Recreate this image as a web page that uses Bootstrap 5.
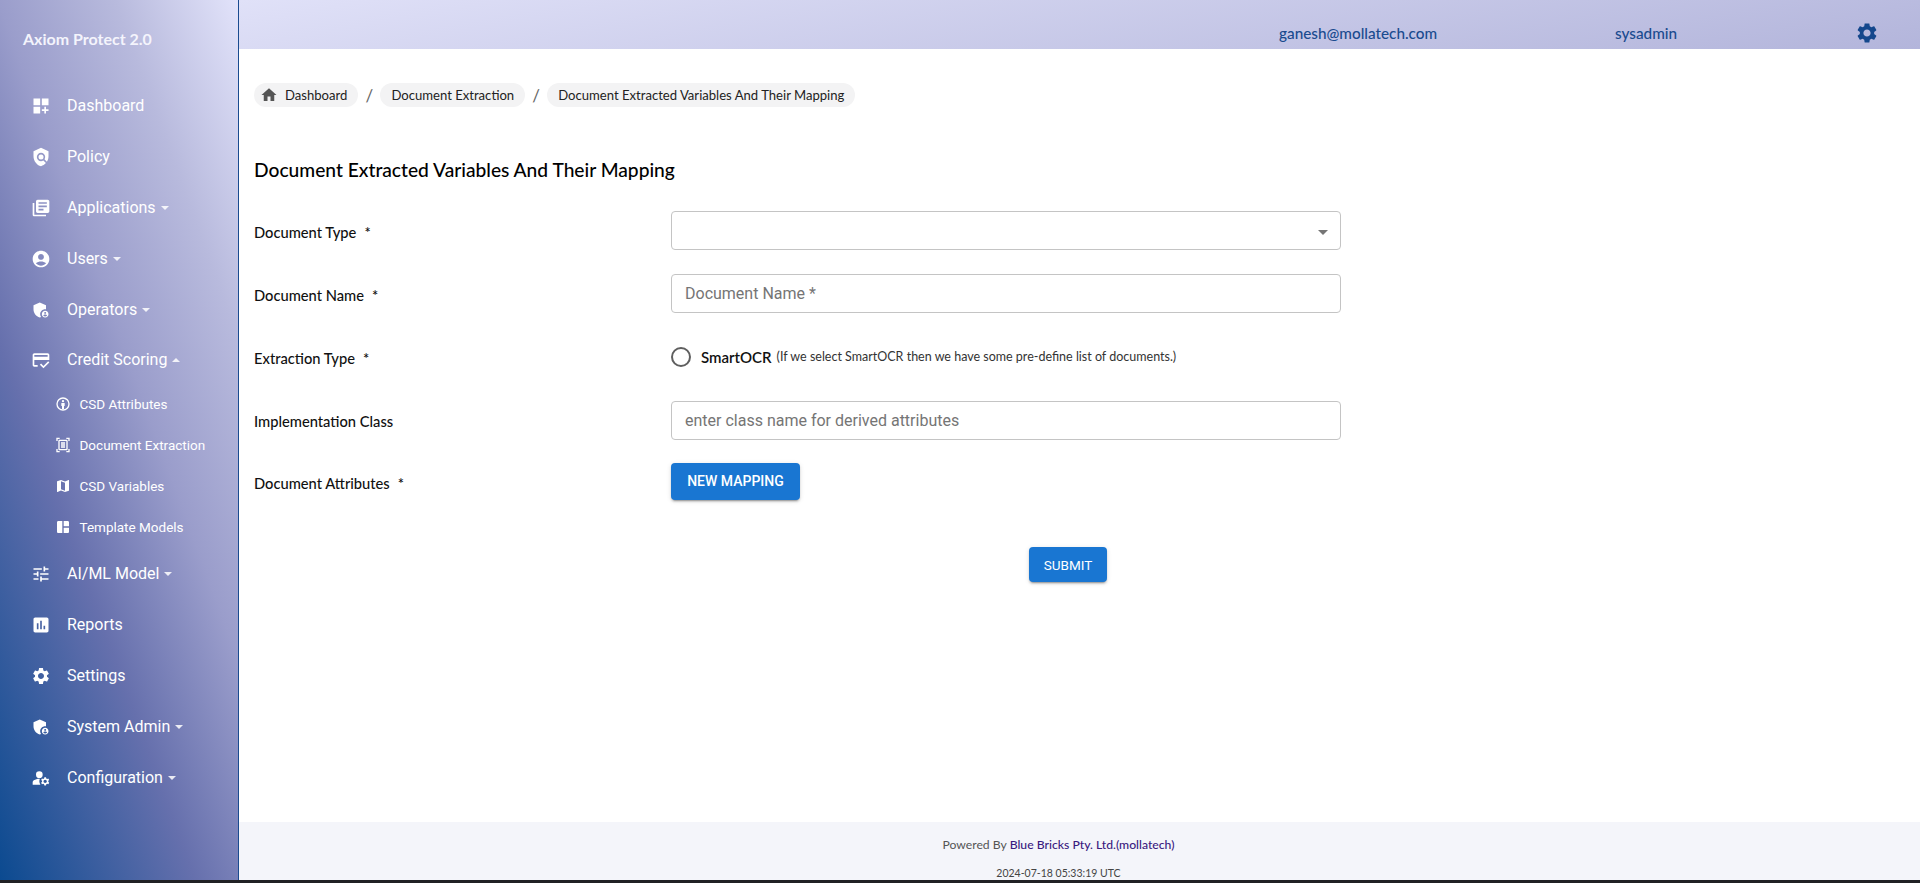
<!doctype html>
<html lang="en">
<head>
<meta charset="utf-8">
<title>Axiom Protect 2.0</title>
<link href="https://cdn.jsdelivr.net/npm/bootstrap@5.3.0/dist/css/bootstrap.min.css" rel="stylesheet">
<style>
html,body{height:883px;overflow:hidden;background:#202124;}
body{font-family:"Lato","Liberation Sans",sans-serif;color:#111;}
.shell{height:880px;background:#fff;}
.sidebar{width:239px;flex:none;background:linear-gradient(70deg,#0b4a90 0%,#6670ad 35%,#9a9dcb 57%,#b8badd 78%,#e2e3fa 100%);border-right:1px solid #1a4b8f;color:#fff;}
.brand{font-size:16px;font-weight:700;padding:29px 0 0 23px;height:81px;color:#f4f4fc;line-height:20px;}
.side-link{height:50.8px;padding-left:30px;color:#fff;font:400 16px/20px Roboto,sans-serif;text-decoration:none;}
.side-link svg{width:20px;height:20px;fill:#fff;flex:none;margin-right:16px;margin-left:1px;}
.side-sub{height:41px;padding-left:55px;color:#fff;font:400 13.5px/16px Roboto,sans-serif;text-decoration:none;}
.side-sub svg{width:16px;height:16px;fill:#fff;flex:none;margin-right:8.5px;margin-left:0;}
.caret-d,.caret-u{display:inline-block;margin-left:5px;border-left:4.5px solid transparent;border-right:4.5px solid transparent;}
.caret-d{border-top:4.5px solid rgba(255,255,255,.85);}
.caret-u{border-bottom:4.5px solid rgba(255,255,255,.85);}
.subgroup{margin-top:-1.8px;margin-bottom:1px;}
.topbar{height:49px;padding-top:17px;background:linear-gradient(170deg,#e0e1f8 0%,#b3b5db 100%);color:#1a4b8f;font-size:15.3px;font-weight:500;}
.top-mail{margin-left:1040px;width:336px;}
.top-role{width:240px;}
.topbar svg{width:24px;height:24px;fill:#14478c;}
.crumbs{padding:34px 0 0 15px;height:108px;font-size:13.1px;color:#222;}
.chip{height:24px;border-radius:12px;background:#f3f3f4;padding:0 11px;line-height:24px;white-space:nowrap;}
.chip svg{width:18px;height:18px;fill:#555;margin:0 7px 0 -5px;}
.crumb-sep{width:22px;text-align:center;color:#666;font-size:17px;}
.heading{margin:0 0 0 15px;font-size:19.2px;font-weight:500;line-height:24px;color:#000;height:54px;padding-top:1px;}
.form-area{padding-left:15px;}
.field-line{display:flex;align-items:center;}
.line-radio{height:40px;}
.line-class{margin-bottom:23px;}
.field-label{width:417px;flex:none;font-size:14.7px;font-weight:500;color:#111;padding-top:3px;}
.line-class .field-label{padding-top:2px;}
.req{margin-left:8px;}
.field-box{width:670px;flex:none;height:39px;border:1px solid #c4c4c4;border-radius:4px;background:#fff;padding:0 13px;font:400 16px Roboto,sans-serif;color:#212529;box-shadow:none;}
.field-box::placeholder{color:#757575;opacity:1;}
.select-tri{position:relative;}
.select-tri::after{content:"";position:absolute;right:12px;top:18px;border-left:5px solid transparent;border-right:5px solid transparent;border-top:5px solid #757575;}
.radio-ring{width:20px;height:20px;border:2px solid #5f5f5f;border-radius:50%;flex:none;margin-right:10px;}
.radio-main{font-size:15px;font-weight:600;color:#111;}
.radio-note{font-size:12.5px;color:#333;margin-left:5px;}
.mat-btn{background:#1976d2;border:0;border-radius:4px;color:#fff;font:400 14px Roboto,sans-serif;box-shadow:0 3px 1px -2px rgba(0,0,0,.2),0 2px 2px 0 rgba(0,0,0,.14),0 1px 5px 0 rgba(0,0,0,.12);padding:0;}
.btn-new{width:129px;height:37px;font-weight:500;padding-bottom:2px;}
.btn-send{width:78px;height:35px;margin-left:775px;margin-top:47px;font-size:13.5px;}
.page-foot{height:58px;padding-right:42px;background:#f4f5fa;text-align:center;font-size:12.2px;color:#555;}
.page-foot .who{color:#3a1a80;font-weight:500;}
.foot-a{height:45px;padding-top:14px;line-height:18px;}
.foot-b{font-size:10.5px;line-height:13px;color:#444;}
</style>
</head>
<body>
<svg width="0" height="0" class="d-none">
<symbol id="i-dash" viewBox="0 0 24 24"><path d="M3 3h8v8H3zm10 0h8v8h-8zM3 13h8v8H3zm15 0h-2v3h-3v2h3v3h2v-3h3v-2h-3z"/></symbol>
<symbol id="i-policy" viewBox="0 0 24 24"><path d="M12 1 3 5v6c0 5.55 3.84 10.74 9 12 2.3-.56 4.33-1.9 5.88-3.71l-3.12-3.12c-1.94 1.29-4.58 1.07-6.29-.64-1.95-1.95-1.95-5.12 0-7.07 1.95-1.95 5.12-1.95 7.07 0 1.71 1.71 1.92 4.35.64 6.29l2.9 2.9C20.29 15.69 21 13.38 21 11V5l-9-4z"/><circle cx="12" cy="12" r="3"/></symbol>
<symbol id="i-books" viewBox="0 0 24 24"><path d="M4 6H2v14c0 1.1.9 2 2 2h14v-2H4V6zm16-4H8c-1.1 0-2 .9-2 2v12c0 1.1.9 2 2 2h12c1.1 0 2-.9 2-2V4c0-1.1-.9-2-2-2zm-1 9H9V9h10v2zm-4 4H9v-2h6v2zm4-8H9V5h10v2z"/></symbol>
<symbol id="i-user" viewBox="0 0 24 24"><path d="M12 2C6.48 2 2 6.48 2 12s4.48 10 10 10 10-4.48 10-10S17.52 2 12 2zm0 4c1.93 0 3.5 1.57 3.5 3.5S13.93 13 12 13s-3.5-1.57-3.5-3.5S10.07 6 12 6zm0 14c-2.03 0-4.43-.82-6.14-2.88C7.55 15.8 9.68 15 12 15s4.45.8 6.14 2.12C16.43 19.18 14.03 20 12 20z"/></symbol>
<symbol id="i-admin" viewBox="0 0 24 24"><path d="M17 11c.34 0 .67.04 1 .09V6.27L10.5 3 3 6.27v4.91c0 4.54 3.2 8.79 7.5 9.82.55-.13 1.08-.32 1.6-.55-.69-.98-1.1-2.17-1.1-3.45 0-3.31 2.69-6 6-6z"/><path d="M17 13c-2.21 0-4 1.79-4 4s1.79 4 4 4 4-1.79 4-4-1.79-4-4-4zm0 1.38c.62 0 1.12.51 1.12 1.12s-.51 1.12-1.12 1.12-1.12-.51-1.12-1.12.5-1.12 1.12-1.12zm0 5.37c-.93 0-1.74-.46-2.24-1.17.05-.72 1.51-1.08 2.24-1.08s2.19.36 2.24 1.08c-.5.71-1.31 1.17-2.24 1.17z"/></symbol>
<symbol id="i-credit" viewBox="0 0 24 24"><path d="M20 4H4c-1.11 0-2 .89-2 2v12c0 1.11.89 2 2 2h4v-2H4v-6h18V6c0-1.11-.89-2-2-2zm0 4H4V6h16v2zm-5.07 11.17-2.83-2.83-1.41 1.41L14.93 22 22 14.93l-1.41-1.41-5.66 5.65z"/></symbol>
<symbol id="i-attr" viewBox="0 0 24 24"><path fill-rule="evenodd" d="M12 2a10 10 0 1 0 0 20 10 10 0 0 0 0-20zm0 2a8 8 0 1 1 0 16 8 8 0 0 1 0-16z"/><circle cx="12" cy="7.8" r="1.7"/><path d="M9.5 10.5h5V15h-1v4.5h-3V15h-1z"/></symbol>
<symbol id="i-scan" viewBox="0 0 24 24"><path d="M7 3H4v3H2V1h5v2zm15 3V1h-5v2h3v3h2zM7 21H4v-3H2v5h5v-2zm13-3v3h-3v2h5v-5h-2z"/><path fill-rule="evenodd" d="M7 4h10c1.1 0 2 .9 2 2v12c0 1.1-.9 2-2 2H7c-1.1 0-2-.9-2-2V6c0-1.1.9-2 2-2zm0 2v12h10V6H7z"/><path d="M9 8h6v2H9zm0 3h6v2H9zm0 3h6v2H9z"/></symbol>
<symbol id="i-map" viewBox="0 0 24 24"><path d="M20.5 3l-.16.03L15 5.1 9 3 3.36 4.9c-.21.07-.36.25-.36.48V20.5c0 .28.22.5.5.5l.16-.03L9 18.9l6 2.1 5.64-1.9c.21-.07.36-.25.36-.48V3.5c0-.28-.22-.5-.5-.5zM15 19l-6-2.11V5l6 2.11V19z"/></symbol>
<symbol id="i-mosaic" viewBox="0 0 24 24"><path d="M3 5v14c0 1.1.89 2 2 2h6V3H5c-1.11 0-2 .9-2 2zm16-2h-6v8h8V5c0-1.1-.9-2-2-2zm-6 18h6c1.1 0 2-.9 2-2v-6h-8v8z"/></symbol>
<symbol id="i-tune" viewBox="0 0 24 24"><path d="M3 17v2h6v-2H3zM3 5v2h10V5H3zm10 16v-2h8v-2h-8v-2h-2v6h2zM7 9v2H3v2h4v2h2V9H7zm14 4v-2H11v2h10zm-6-4h2V7h4V5h-4V3h-2v6z"/></symbol>
<symbol id="i-report" viewBox="0 0 24 24"><path d="M19 3H5c-1.1 0-2 .9-2 2v14c0 1.1.9 2 2 2h14c1.1 0 2-.9 2-2V5c0-1.1-.9-2-2-2zM9 17H7v-7h2v7zm4 0h-2V7h2v10zm4 0h-2v-4h2v4z"/></symbol>
<symbol id="i-gear" viewBox="0 0 24 24"><path d="M19.14 12.94c.04-.3.06-.61.06-.94 0-.32-.02-.64-.07-.94l2.03-1.58c.18-.14.23-.41.12-.61l-1.92-3.32c-.12-.22-.37-.29-.59-.22l-2.39.96c-.5-.38-1.03-.7-1.62-.94l-.36-2.54c-.04-.24-.24-.41-.48-.41h-3.84c-.24 0-.43.17-.47.41l-.36 2.54c-.59.24-1.13.57-1.62.94l-2.39-.96c-.22-.08-.47 0-.59.22L2.74 8.87c-.12.21-.08.47.12.61l2.03 1.58c-.05.3-.09.63-.09.94s.02.64.07.94l-2.03 1.58c-.18.14-.23.41-.12.61l1.92 3.32c.12.22.37.29.59.22l2.39-.96c.5.38 1.03.7 1.62.94l.36 2.54c.05.24.24.41.48.41h3.84c.24 0 .44-.17.47-.41l.36-2.54c.59-.24 1.13-.56 1.62-.94l2.39.96c.22.08.47 0 .59-.22l1.92-3.32c.12-.22.07-.47-.12-.61l-2.01-1.58zM12 15.6c-1.98 0-3.6-1.62-3.6-3.6s1.62-3.6 3.6-3.6 3.6 1.62 3.6 3.6-1.62 3.6-3.6 3.6z"/></symbol>
<symbol id="i-manage" viewBox="0 0 24 24"><circle cx="10" cy="8" r="4"/><path d="M10.67 13.02c-.22-.01-.44-.02-.67-.02-2.42 0-4.68.67-6.61 1.82-.88.52-1.39 1.5-1.39 2.53V20h9.26c-.79-1.13-1.26-2.51-1.26-4 0-1.07.25-2.07.67-2.98z"/><path d="M20.75 16c0-.22-.03-.42-.06-.63l1.14-1.01-1-1.73-1.45.49c-.32-.27-.68-.48-1.08-.63L18 11h-2l-.3 1.49c-.4.15-.76.36-1.08.63l-1.45-.49-1 1.73 1.14 1.01c-.03.21-.06.41-.06.63s.03.42.06.63l-1.14 1.01 1 1.73 1.45-.49c.32.27.68.48 1.08.63L16 21h2l.3-1.49c.4-.15.76-.36 1.08-.63l1.45.49 1-1.73-1.14-1.01c.03-.21.06-.41.06-.63zM17 18c-1.1 0-2-.9-2-2s.9-2 2-2 2 .9 2 2-.9 2-2 2z"/></symbol>
<symbol id="i-home" viewBox="0 0 24 24"><path d="M10 20v-6h4v6h5v-8h3L12 3 2 12h3v8z"/></symbol>
</svg>
<div class="shell d-flex">
  <aside class="sidebar d-flex flex-column">
    <div class="brand">Axiom Protect 2.0</div>
    <nav class="nav flex-column flex-nowrap">
      <a class="side-link d-flex align-items-center" href="#"><svg><use href="#i-dash"/></svg>Dashboard</a>
      <a class="side-link d-flex align-items-center" href="#"><svg><use href="#i-policy"/></svg>Policy</a>
      <a class="side-link d-flex align-items-center" href="#"><svg><use href="#i-books"/></svg>Applications<span class="caret-d"></span></a>
      <a class="side-link d-flex align-items-center" href="#"><svg><use href="#i-user"/></svg>Users<span class="caret-d"></span></a>
      <a class="side-link d-flex align-items-center" href="#"><svg><use href="#i-admin"/></svg>Operators<span class="caret-d"></span></a>
      <a class="side-link d-flex align-items-center" href="#"><svg><use href="#i-credit"/></svg>Credit Scoring<span class="caret-u"></span></a>
      <div class="subgroup d-flex flex-column">
        <a class="side-sub d-flex align-items-center" href="#"><svg><use href="#i-attr"/></svg>CSD Attributes</a>
        <a class="side-sub d-flex align-items-center" href="#"><svg><use href="#i-scan"/></svg>Document Extraction</a>
        <a class="side-sub d-flex align-items-center" href="#"><svg><use href="#i-map"/></svg>CSD Variables</a>
        <a class="side-sub d-flex align-items-center" href="#"><svg><use href="#i-mosaic"/></svg>Template Models</a>
      </div>
      <a class="side-link d-flex align-items-center" href="#"><svg><use href="#i-tune"/></svg>AI/ML Model<span class="caret-d"></span></a>
      <a class="side-link d-flex align-items-center" href="#"><svg><use href="#i-report"/></svg>Reports</a>
      <a class="side-link d-flex align-items-center" href="#"><svg><use href="#i-gear"/></svg>Settings</a>
      <a class="side-link d-flex align-items-center" href="#"><svg><use href="#i-admin"/></svg>System Admin<span class="caret-d"></span></a>
      <a class="side-link d-flex align-items-center" href="#"><svg><use href="#i-manage"/></svg>Configuration<span class="caret-d"></span></a>
    </nav>
  </aside>
  <div class="flex-grow-1 d-flex flex-column">
    <header class="topbar d-flex align-items-center">
      <div class="top-mail">ganesh@mollatech.com</div>
      <div class="top-role">sysadmin</div>
      <svg><use href="#i-gear"/></svg>
    </header>
    <main class="flex-grow-1">
      <div class="crumbs d-flex align-items-start">
        <span class="chip d-inline-flex align-items-center"><svg><use href="#i-home"/></svg>Dashboard</span>
        <span class="crumb-sep">/</span>
        <span class="chip">Document Extraction</span>
        <span class="crumb-sep">/</span>
        <span class="chip">Document Extracted Variables And Their Mapping</span>
      </div>
      <h1 class="heading">Document Extracted Variables And Their Mapping</h1>
      <div class="form-area d-flex flex-column">
        <div class="field-line mb-4">
          <label class="field-label">Document Type<span class="req">*</span></label>
          <div class="field-box select-tri"></div>
        </div>
        <div class="field-line mb-4">
          <label class="field-label">Document Name<span class="req">*</span></label>
          <input class="field-box" placeholder="Document Name *">
        </div>
        <div class="field-line line-radio mb-4">
          <label class="field-label">Extraction Type<span class="req">*</span></label>
          <div class="d-flex align-items-center"><span class="radio-ring"></span><span class="radio-main">SmartOCR</span><span class="radio-note">(If we select SmartOCR then we have some pre-define list of documents.)</span></div>
        </div>
        <div class="field-line line-class">
          <label class="field-label">Implementation Class</label>
          <input class="field-box" placeholder="enter class name for derived attributes">
        </div>
        <div class="field-line">
          <label class="field-label">Document Attributes<span class="req">*</span></label>
          <button class="mat-btn btn-new" type="button">NEW MAPPING</button>
        </div>
        <div><button class="mat-btn btn-send" type="button">SUBMIT</button></div>
      </div>
    </main>
    <footer class="page-foot">
      <div class="foot-a">Powered By <span class="who">Blue Bricks Pty. Ltd.(mollatech)</span></div>
      <div class="foot-b">2024-07-18 05:33:19 UTC</div>
    </footer>
  </div>
</div>
</body>
</html>
